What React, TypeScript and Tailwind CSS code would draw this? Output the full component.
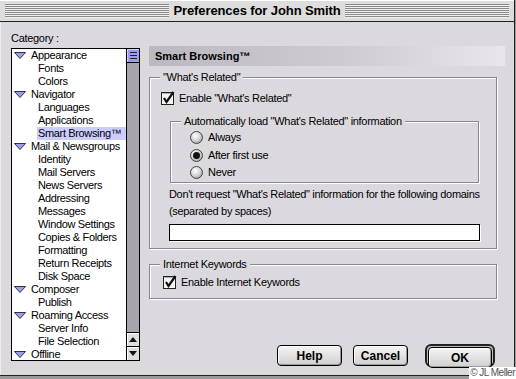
import React from "react";

const font = "font-['Liberation_Sans',Arial,sans-serif]";

function Tri() {
  return (
    <svg width="12" height="7" viewBox="0 0 12 7" className="shrink-0">
      <polygon points="0.5,0.5 11.5,0.5 6,6.5" fill="#9c9cf0" stroke="#333" strokeWidth="1" />
    </svg>
  );
}

function Check() {
  return (
    <svg width="15" height="14" viewBox="0 0 15 14" className="shrink-0">
      <rect x="0.5" y="1.5" width="12" height="12" fill="#f4f4f4" stroke="#222" />
      <line x1="1.5" y1="2.5" x2="11.5" y2="2.5" stroke="#aaa" />
      <path d="M3 7 L5.5 11 L12.5 1" fill="none" stroke="#111" strokeWidth="2.2" />
    </svg>
  );
}

function Radio({ on }: { on?: boolean }) {
  return (
    <div className="w-[13px] h-[13px] rounded-full border border-[#444] bg-[radial-gradient(circle_at_40%_35%,#ffffff_0%,#d8d8d8_45%,#8a8a8a_100%)] flex items-center justify-center shrink-0">
      {on && <div className="w-[7px] h-[7px] rounded-full bg-[#111]" />}
    </div>
  );
}

type Item = { t: string; p?: boolean; sel?: boolean };
const items: Item[] = [
  { t: "Appearance", p: true },
  { t: "Fonts" },
  { t: "Colors" },
  { t: "Navigator", p: true },
  { t: "Languages" },
  { t: "Applications" },
  { t: "Smart Browsing™", sel: true },
  { t: "Mail & Newsgroups", p: true },
  { t: "Identity" },
  { t: "Mail Servers" },
  { t: "News Servers" },
  { t: "Addressing" },
  { t: "Messages" },
  { t: "Window Settings" },
  { t: "Copies & Folders" },
  { t: "Formatting" },
  { t: "Return Receipts" },
  { t: "Disk Space" },
  { t: "Composer", p: true },
  { t: "Publish" },
  { t: "Roaming Access", p: true },
  { t: "Server Info" },
  { t: "File Selection" },
  { t: "Offline", p: true },
];

function Button({ label, w }: { label: string; w: string }) {
  return (
    <div
      className={`${w} h-[21px] rounded-[4px] border border-black bg-[linear-gradient(#f4f4f4,#d0d0d0)] shadow-[inset_1px_1px_0_#fff,inset_-1px_-1px_0_#999] flex items-center justify-center text-[12px] font-bold text-black tracking-[0px]`}
    >
      {label}
    </div>
  );
}

export default function App() {
  return (
    <div className={`w-[516px] h-[379px] relative overflow-hidden bg-[#9a9a9a] ${font} tracking-[-0.3px]`}>
      <div className="w-[515px] h-[376px] bg-[#dcd9de] border-r border-b border-[#222] flex flex-col">
        {/* Title bar */}
        <div className="h-[22px] bg-[#dddddd] border-b border-[#222] flex items-center px-[5px] shadow-[inset_0_1px_0_#fff]">
          <div className="flex-1 h-[14px] bg-[repeating-linear-gradient(to_bottom,#8a8a8a_0px,#8a8a8a_1px,#f0f0f0_1px,#f0f0f0_2px)]" />
          <div className="px-[4px] text-[13px] font-bold text-black leading-none tracking-[-0.1px]">
            Preferences for John Smith
          </div>
          <div className="flex-1 h-[14px] bg-[repeating-linear-gradient(to_bottom,#8a8a8a_0px,#8a8a8a_1px,#f0f0f0_1px,#f0f0f0_2px)]" />
        </div>

        <div className="flex flex-1 border-l border-[#eee]">
          {/* Left column */}
          <div className="ml-[10px] w-[129px] flex flex-col">
            <div className="mt-[9px] h-[14px] text-[11px] leading-[14px] text-black">Category :</div>
            <div className="mt-[3px] h-[313px] border border-black bg-white flex">
              <div className="w-[114px] flex flex-col overflow-hidden">
                {items.map((it) => (
                  <div key={it.t} className="h-[13px] flex items-center text-[11px] leading-[13px] text-black whitespace-nowrap tracking-[-0.35px]">
                    {it.p ? (
                      <div className="flex items-center pl-[2px] gap-[5px]">
                        <Tri />
                        <span>{it.t}</span>
                      </div>
                    ) : (
                      <div className={`ml-[25px] pl-[1px] pr-[4px] h-[13px] flex items-center flex-1 ${it.sel ? "bg-[#ccccff]" : ""}`}>
                        {it.t}
                      </div>
                    )}
                  </div>
                ))}
              </div>
              {/* Scrollbar */}
              <div className="w-[13px] border-l border-black bg-[#a8a4ac] flex flex-col">
                <div className="h-[14px] bg-[#9c9cf0] border-b border-black flex flex-col items-center justify-center gap-[2px] shadow-[inset_1px_1px_0_#ccccff]">
                  <div className="w-[7px] h-[1px] bg-[#222]" />
                  <div className="w-[7px] h-[1px] bg-[#222]" />
                  <div className="w-[7px] h-[1px] bg-[#222]" />
                </div>
                <div className="flex-1" />
                <div className="h-[14px] bg-[#dddddd] border-t border-black flex items-center justify-center shadow-[inset_1px_1px_0_#fff]">
                  <svg width="8" height="5" viewBox="0 0 8 5"><polygon points="0,5 8,5 4,0" fill="#111" /></svg>
                </div>
                <div className="h-[14px] bg-[#dddddd] border-t border-black flex items-center justify-center shadow-[inset_1px_1px_0_#fff]">
                  <svg width="8" height="5" viewBox="0 0 8 5"><polygon points="0,0 8,0 4,5" fill="#111" /></svg>
                </div>
              </div>
            </div>
          </div>

          {/* Right column */}
          <div className="ml-[9px] w-[356px] flex flex-col">
            <div className="mt-[24px] h-[20px] bg-[linear-gradient(to_right,#bcb8c0,#cfcbd3_55%,#e9e5ed)] flex items-center px-[6px] text-[11px] font-bold text-black tracking-[0px]">
              Smart Browsing™
            </div>

            {/* What's Related group */}
            <div className="relative mt-[11px] w-[348px] h-[172px] border border-[#8a8690] shadow-[inset_1px_1px_0_#fff,1px_1px_0_#fff] flex flex-col">
              <span className="absolute -top-[8px] left-[10px] px-[3px] bg-[#dcd9de] text-[11px] leading-[14px] text-black">
                "What's Related"
              </span>
              <div className="mt-[12px] ml-[11px] flex items-center gap-[3px] text-[11px] text-black">
                <Check />
                <span>Enable "What's Related"</span>
              </div>
              <div className="relative mt-[14px] ml-[20px] w-[309px] h-[62px] border border-[#8a8690] shadow-[inset_1px_1px_0_#fff,1px_1px_0_#fff] flex flex-col">
                <span className="absolute -top-[8px] left-[10px] px-[3px] bg-[#dcd9de] text-[11px] leading-[14px] text-black whitespace-nowrap">
                  Automatically load "What's Related" information
                </span>
                <div className="mt-[9px] ml-[19px] flex flex-col gap-[3.5px] text-[11px] text-black">
                  <div className="h-[14px] flex items-center gap-[5px]"><Radio /><span>Always</span></div>
                  <div className="h-[14px] flex items-center gap-[5px]"><Radio on /><span>After first use</span></div>
                  <div className="h-[14px] flex items-center gap-[5px]"><Radio /><span>Never</span></div>
                </div>
              </div>
              <div className="mt-[3px] ml-[19px] text-[11px] leading-[17px] text-black tracking-[-0.32px]">
                Don't request "What's Related" information for the following domains
                <br />
                (separated by spaces)
              </div>
              <div className="mt-[4px] ml-[19px] w-[311px] h-[17px] border border-black bg-white shadow-[1px_1px_0_#fff]" />
            </div>

            {/* Internet Keywords group */}
            <div className="relative mt-[15px] w-[348px] h-[35px] border border-[#8a8690] shadow-[inset_1px_1px_0_#fff,1px_1px_0_#fff] flex flex-col">
              <span className="absolute -top-[8px] left-[10px] px-[3px] bg-[#dcd9de] text-[11px] leading-[14px] text-black">
                Internet Keywords
              </span>
              <div className="mt-[9px] ml-[13px] flex items-center gap-[3px] text-[11px] text-black">
                <Check />
                <span>Enable Internet Keywords</span>
              </div>
            </div>

            {/* Buttons */}
            <div className="mt-[45px] flex items-center justify-end pr-[10px]">
              <Button label="Help" w="w-[65px]" />
              <div className="w-[11px]" />
              <Button label="Cancel" w="w-[55px]" />
              <div className="w-[17px]" />
              <div className="w-[70px] h-[23px] rounded-[6px] border-2 border-[#222] bg-[#bdbdbd] p-[1px] flex">
                <Button label="OK" w="w-full" />
              </div>
            </div>
          </div>
        </div>
      </div>
      <div className="absolute right-0 bottom-0 h-[12px] px-[1px] bg-white text-[10px] leading-[12px] text-[#555] font-['Liberation_Sans',sans-serif] tracking-[-0.5px]">
        © JL Meller
      </div>
    </div>
  );
}
